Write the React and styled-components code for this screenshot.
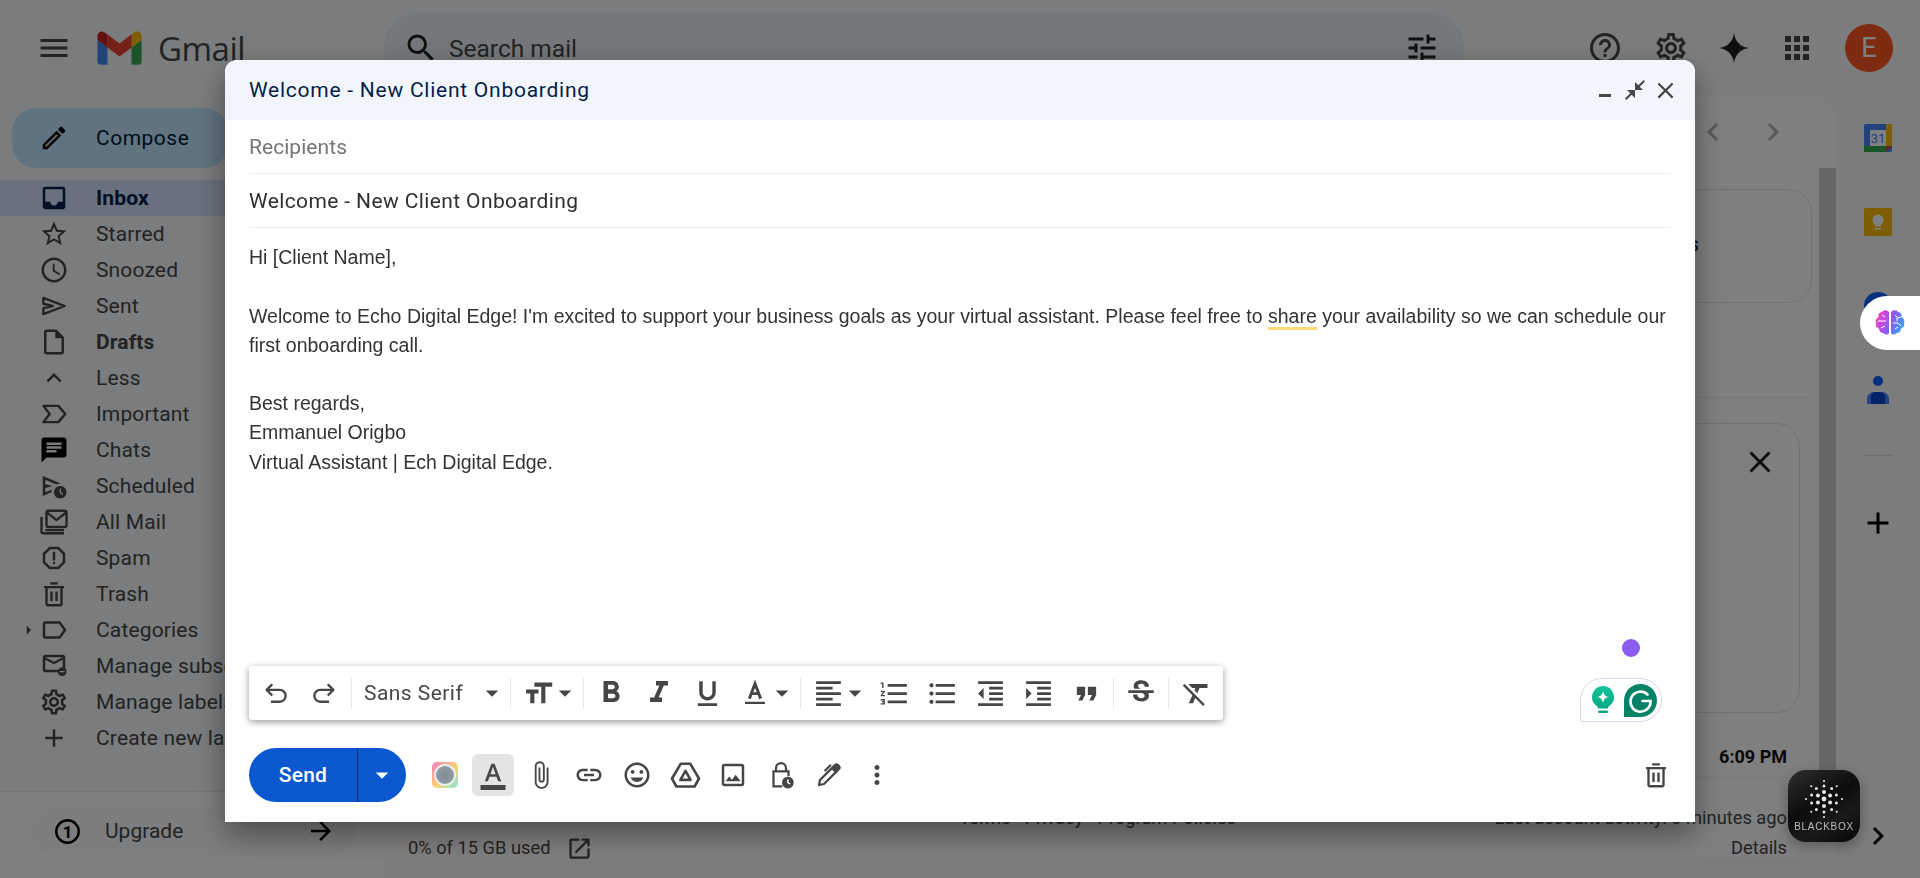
import styled, { createGlobalStyle } from 'styled-components';
import {
  MdMenu, MdSearch, MdTune, MdHelpOutline, MdOutlineSettings, MdApps, MdOutlineCreate, MdInbox,
  MdStarBorder, MdOutlineWatchLater, MdOutlineInsertDriveFile, MdExpandLess,
  MdChat, MdOutlineScheduleSend, MdOutlineReport,
  MdOutlineLabel, MdOutlineUnsubscribe, MdAdd, MdArrowForward, MdOpenInNew, MdChevronLeft,
  MdChevronRight, MdClose, MdCloseFullscreen, MdFormatSize, MdArrowDropDown,
  MdArrowRight, MdFormatBold, MdFormatItalic, MdFormatUnderlined, MdFormatColorText,
  MdFormatAlignLeft, MdFormatListNumbered, MdFormatListBulleted, MdFormatIndentDecrease,
  MdFormatIndentIncrease, MdFormatQuote, MdStrikethroughS, MdFormatClear, MdAttachFile, MdLink,
  MdOutlineInsertEmoticon, MdOutlineImage, MdMoreVert,
} from 'react-icons/md';

const GlobalStyle = createGlobalStyle`
  html, body, #root {
    margin: 0;
    height: 100%;
    overflow: hidden;
  }

  body {
    font-family: Roboto, "Liberation Sans", sans-serif;
    background: #f6f8fc;
  }
`;

const Page = styled.div`
  height: 100vh;
  display: grid;
  grid-template-columns: 384px 1fr 84px;
  grid-template-rows: 96px 1fr;
  background: #f6f8fc;
  color: #444746;
`;

const Header = styled.header`
  grid-column: 1 / -1;
  display: flex;
  align-items: center;
`;

const Brand = styled.div`
  width: 384px;
  display: flex;
  align-items: center;
  padding-left: 36px;
  box-sizing: border-box;
  gap: 25px;
`;

const BrandName = styled.span`
  margin-left: -9px;
  font-family: "Open Sans", sans-serif;
  font-size: 33px;
  letter-spacing: -0.5px;
  color: #444746;
`;

const SearchBar = styled.div`
  width: 1080px;
  height: 72px;
  border-radius: 36px;
  background: #e9eef6;
  display: flex;
  align-items: center;
  padding: 0 24px 0 19px;
  box-sizing: border-box;
  color: #1f1f1f;
`;

const SearchText = styled.span`
  flex: 1;
  margin-left: 10px;
  font-size: 24.5px;
  color: #444746;
`;

const HeaderIcons = styled.div`
  margin-left: auto;
  padding-right: 27px;
  display: flex;
  align-items: center;
  gap: 27px;
  color: #444746;
`;

const HeaderIcon = styled.span`
  width: 36px;
  height: 36px;
  display: flex;
  align-items: center;
  justify-content: center;
  margin-right: ${p => p.$mr || 0}px;
  color: ${p => p.$color || 'inherit'};
`;

const Avatar = styled.div`
  width: 48px;
  height: 48px;
  border-radius: 50%;
  background: #ff5722;
  color: #fff;
  font-size: 27px;
  display: flex;
  align-items: center;
  justify-content: center;
`;

const Sidebar = styled.aside`
  display: flex;
  flex-direction: column;
  min-height: 0;
`;

const Compose = styled.div`
  margin: 12px 0 12px 12px;
  width: 216px;
  height: 60px;
  border-radius: 24px;
  background: #c2e7ff;
  color: #001d35;
  display: flex;
  align-items: center;
  padding-left: 27px;
  box-sizing: border-box;
  font-size: 21px;
  letter-spacing: 0.5px;
  gap: 27px;
`;

const NavRow = styled.div`
  height: 36px;
  display: flex;
  align-items: center;
  padding-left: 18px;
  font-size: 21px;
  letter-spacing: 0.15px;
  white-space: nowrap;
  overflow: hidden;
  font-weight: ${p => (p.$strong ? 700 : 400)};
  background: ${p => (p.$active ? '#d3e3fd' : 'transparent')};
  color: ${p => (p.$active ? '#041e49' : '#444746')};
`;

const NavCaret = styled.span`
  width: 21px;
  display: flex;
  justify-content: center;
`;

const NavIcon = styled.span`
  width: 30px;
  height: 30px;
  margin-right: 27px;
  display: flex;
  color: ${p => p.$color || 'inherit'};
`;

const UpgradeBox = styled.div`
  margin-top: auto;
  height: 87px;
  border-top: 1px solid #e9ebee;
  background: #ffffff;
  padding-top: 15px;
  box-sizing: border-box;
`;

const UpgradePill = styled.div`
  margin-left: 30px;
  width: 325px;
  height: 48px;
  border-radius: 24px;
  background: #f8fafd;
  display: flex;
  align-items: center;
  padding: 0 19px 0 24px;
  box-sizing: border-box;
  font-size: 21px;
  gap: 24px;
`;

const UpgradeLabel = styled.span`
  flex: 1;
`;

const MainPanel = styled.main`
  display: flex;
  flex-direction: column;
  background: #fff;
  border-radius: 24px 24px 0 0;
  margin-bottom: 20px;
  min-height: 0;
`;

const MailBar = styled.div`
  height: 72px;
  display: flex;
  align-items: center;
  justify-content: flex-end;
  gap: 24px;
  padding-right: 45px;
  color: #b4b4b4;
`;

const ScrollArea = styled.div`
  flex: 1;
  display: flex;
  min-height: 0;
`;

const MailContent = styled.div`
  flex: 1;
  padding: 21px 0 0 24px;
  display: flex;
  flex-direction: column;

  > * {
    flex-shrink: 0;
  }
`;

const Scrollbar = styled.div`
  width: 17px;
  height: 632px;
  margin-left: 7px;
  background: #cfcfcf;
`;

const Card = styled.div`
  border: 1px solid #e3e3e3;
  border-radius: 24px;
  box-sizing: border-box;
  height: ${p => p.$height}px;
  margin-right: ${p => p.$inset || 0}px;
  display: flex;
  justify-content: flex-end;
  align-items: ${p => (p.$top ? 'flex-start' : 'center')};
  padding: ${p => (p.$top ? '20px 21px 0 0' : '0 112px 4px 0')};
  font-size: 21px;
  color: #1f1f1f;
`;

const Rule = styled.div`
  height: ${p => p.$height}px;
  margin-bottom: 25px;
  border-bottom: 1px solid #eeeeee;
`;

const TimeRow = styled.div`
  height: 65px;
  padding: 26px 25px 0 0;
  box-sizing: border-box;
  border-bottom: 1px solid #eeeeee;
  text-align: right;
  font-size: 18px;
  font-weight: 700;
  line-height: 36px;
  color: #111;
`;

const MailFooter = styled.div`
  display: grid;
  grid-template-columns: 1fr auto 1fr;
  padding: 25px 25px 0 0;
  font-size: 18.3px;
  line-height: 30px;
  color: #444746;
`;

const StorageNote = styled.div`
  margin-top: 30px;
  display: flex;
  align-items: center;
  gap: 15px;
`;

const AccountNote = styled.div`
  text-align: right;
`;

const Rail = styled.aside`
  display: flex;
  flex-direction: column;
  align-items: center;
`;

const RailCell = styled.div`
  height: 84px;
  display: flex;
  align-items: center;
  justify-content: center;
`;

const RailRule = styled.div`
  width: 30px;
  height: 1px;
  margin: 23px 0 37px;
  background: #dddddd;
`;

const RailPlus = styled.div`
  height: 60px;
  display: flex;
  align-items: center;
  color: #000;
`;

const RailChevron = styled.div`
  margin-top: auto;
  padding-bottom: 24px;
  color: #000;
  display: flex;
`;

const Overlay = styled.div`
  position: fixed;
  inset: 0;
  padding: 60px 225px 56px;
  box-sizing: border-box;
  background: rgba(0, 0, 0, 0.5);
`;

const Dialog = styled.section`
  position: relative;
  height: 100%;
  display: flex;
  flex-direction: column;
  background: #fff;
  border-radius: 12px 12px 0 0;
  box-shadow: 0 12px 30px rgba(0, 0, 0, 0.4);
`;

const TitleBar = styled.div`
  height: 60px;
  flex-shrink: 0;
  display: flex;
  align-items: center;
  padding: 0 15px 0 24px;
  background: #f2f6fc;
  border-radius: 12px 12px 0 0;
  color: #041e49;
  font-size: 21px;
  letter-spacing: 0.75px;
`;

const TitleText = styled.span`
  flex: 1;
`;

const TitleButton = styled.span`
  width: 30px;
  height: 30px;
  display: flex;
  align-items: center;
  justify-content: center;
  color: #444746;
`;

const Field = styled.div`
  height: 54px;
  margin: 0 24px;
  flex-shrink: 0;
  display: flex;
  align-items: center;
  box-sizing: border-box;
  border-bottom: 1.5px solid #eeeeee;
  font-size: 21px;
  letter-spacing: ${p => (p.$muted ? 0.05 : 0.38)}px;
  color: ${p => (p.$muted ? '#757575' : '#303030')};
`;

const Body = styled.div`
  flex: 1;
  padding: 15px 24px 0;
  font-family: "Liberation Sans", Arial, sans-serif;
  font-size: 19.5px;
  line-height: 29.1px;
  color: #333;
`;

const Flagged = styled.span`
  border-bottom: 3px solid #fcd977;
`;

const Blank = styled.div`
  height: ${p => p.$height || 29.1}px;
`;

const FormatBar = styled.div`
  align-self: flex-start;
  margin-left: 24px;
  height: 54px;
  display: flex;
  align-items: center;
  padding: 0 3px;
  background: #fff;
  border-radius: 3px;
  box-shadow: 0 2px 7px rgba(0, 0, 0, 0.4);
  color: #444746;
`;

const ToolButton = styled.span`
  width: 48px;
  height: 54px;
  display: flex;
  align-items: center;
  justify-content: center;
  flex-shrink: 0;
`;

const ToolCaret = styled.span`
  width: 18px;
  margin: 0 6px 0 -6px;
  display: flex;
  justify-content: center;
  color: #444746;
`;

const ToolSep = styled.span`
  width: 1px;
  height: 30px;
  margin: 0 3px;
  background: #e6e6e6;
`;

const FontPicker = styled.span`
  width: 152px;
  padding-left: 9px;
  box-sizing: border-box;
  display: flex;
  align-items: center;
  justify-content: space-between;
  font-size: 21px;
  letter-spacing: 0.45px;
  color: #444746;
`;

const Actions = styled.div`
  margin-top: 28px;
  height: 54px;
  padding: 0 15px 20px 24px;
  flex-shrink: 0;
  display: flex;
  align-items: center;
  color: #444746;
`;

const SendButton = styled.div`
  width: 157px;
  height: 54px;
  display: flex;
  border-radius: 27px;
  background: #0b57d0;
  color: #fff;
  font-size: 21px;
  font-weight: 500;
  letter-spacing: 0.2px;
  margin-right: 15px;
`;

const SendLabel = styled.span`
  width: 108px;
  display: flex;
  align-items: center;
  justify-content: center;
  border-right: 1px solid #062e70;
`;

const SendCaret = styled.span`
  flex: 1;
  display: flex;
  align-items: center;
  justify-content: center;
`;

const ActionCell = styled.span`
  width: 48px;
  height: 42px;
  display: flex;
  align-items: center;
  justify-content: center;
  margin-left: ${p => (p.$end ? 'auto' : 0)};
`;

const ActionActive = styled.span`
  width: 42px;
  height: 42px;
  display: flex;
  align-items: center;
  justify-content: center;
  border-radius: 6px;
  background: #e4e4e4;
`;

const LensBadge = styled.span`
  width: 26px;
  height: 26px;
  border-radius: 5px;
  background: linear-gradient(135deg, #f77ac0, #fbd36b 55%, #7fe8dc);
  display: flex;
  align-items: center;
  justify-content: center;
`;

const LensDot = styled.span`
  width: 18px;
  height: 18px;
  border-radius: 50%;
  border: 2px solid #e8eef2;
  background: radial-gradient(circle, #7f8a92, #98a2a9);
`;

const PurpleDot = styled.span`
  position: absolute;
  left: 1397px;
  top: 579px;
  width: 18px;
  height: 18px;
  border-radius: 50%;
  background: #8b5cf0;
`;

const GrammarlyPill = styled.div`
  position: absolute;
  left: 1355px;
  top: 618px;
  width: 82px;
  height: 44px;
  box-sizing: border-box;
  border: 1.5px solid #d5d8e6;
  border-radius: 22px 22px 22px 2px;
  background: #fff;
  display: flex;
  align-items: center;
  padding-left: 10px;
  gap: 9px;
`;

const BrainPill = styled.div`
  position: fixed;
  right: 0;
  top: 296px;
  width: 60px;
  height: 54px;
  border-radius: 27px 0 0 27px;
  background: #fff;
  display: flex;
  align-items: center;
  padding-left: 15px;
  box-sizing: border-box;
`;

const BlackboxTile = styled.div`
  position: fixed;
  left: 1788px;
  top: 770px;
  width: 72px;
  height: 72px;
  border-radius: 18px;
  background: linear-gradient(150deg, #2e2e2e, #0c0c0c 45%, #1a1a1a 68%, #050505);
  box-shadow: 0 4px 14px rgba(0, 0, 0, 0.3);
  display: flex;
  flex-direction: column;
  align-items: center;
  padding-top: 9px;
  box-sizing: border-box;
`;

const BlackboxLabel = styled.span`
  margin-top: 2px;
  font-family: "Liberation Sans", sans-serif;
  font-size: 10px;
  letter-spacing: 0.7px;
  color: #bdbdbd;
`;

const GmailLogo = () => (
  <svg width="45" height="34" viewBox="0 2.7 24 18.5">
    <path fill="#4285f4" d="M1.636 21h3.818v-9.273L0 7.636v11.727C0 20.267.733 21 1.636 21z" />
    <path fill="#34a853" d="M18.546 21h3.818C23.267 21 24 20.267 24 19.364V7.636l-5.454 4.091z" />
    <path fill="#fbbc04" d="M18.546 4.636v7.091L24 7.636V5.455c0-2.023-2.309-3.177-3.927-1.964z" />
    <path fill="#ea4335" d="M5.455 11.727V4.636L12 9.545l6.546-4.909v7.091L12 16.636z" />
    <path fill="#c5221f" d="M0 5.455v2.181l5.455 4.091V4.636L3.927 3.491C2.309 2.278 0 3.432 0 5.455z" />
  </svg>
);

const SparkIcon = () => (
  <svg width="32" height="32" viewBox="0 0 24 24" fill="currentColor">
    <path d="M12 0.5C12.6 7 17 11.4 23.5 12 17 12.6 12.6 17 12 23.5 11.4 17 7 12.6 0.5 12 7 11.4 11.4 7 12 0.5z" />
  </svg>
);

const LineIcon = styled.svg`
  fill: none;
  stroke: currentColor;
  stroke-width: ${p => p.$weight || 1.9};
  stroke-linejoin: round;
`;

const SentIcon = () => (
  <LineIcon width="30" height="30" viewBox="0 0 24 24">
    <path d="M3.500 5.500L20.500 12 3.500 18.500v-4.700l7.500-1.800-7.500-1.800z" />
  </LineIcon>
);

const ImportantIcon = () => (
  <LineIcon width="30" height="30" viewBox="0 0 24 24">
    <path d="M3.500 5.500H15.500L21 12l-5.500 6.500H3.500L8.500 12z" />
  </LineIcon>
);

const TrashIcon = () => (
  <LineIcon width="30" height="30" viewBox="0 0 24 24">
    <path d="M6 6.500V20a1 1 0 0 0 1 1h10a1 1 0 0 0 1-1V6.500M4 6.500h16M9 3.500h6M10 10v7.500M14 10v7.500" />
  </LineIcon>
);

const AllMailIcon = () => (
  <LineIcon width="30" height="30" viewBox="0 0 24 24">
    <rect x="6" y="3" width="16" height="13" rx="1.500" />
    <path d="M6.500 4.500l7.500 6 7.500-6" />
    <path d="M2 8v11.500a1.500 1.500 0 0 0 1.500 1.500H20M5 18.500h15" />
  </LineIcon>
);

const UndoIcon = () => (
  <LineIcon width="30" height="30" viewBox="0 0 24 24" $weight={1.9}>
    <path d="M9 5L4.500 9.500 9 14M4.500 9.500H15a4.700 4.700 0 0 1 0 9.500H8" />
  </LineIcon>
);

const RedoIcon = () => (
  <LineIcon width="30" height="30" viewBox="0 0 24 24" $weight={1.9}>
    <path d="M15 5l4.500 4.500L15 14M19.500 9.500H9a4.700 4.700 0 0 0 0 9.500h7" />
  </LineIcon>
);

const TextColorIcon = () => (
  <svg width="30" height="30" viewBox="0 0 24 24">
    <path fill="none" stroke="currentColor" strokeWidth="2.300" d="M7.500 16.500L12 4.500l4.500 12M9 12.500h6" />
    <rect x="4" y="19" width="16" height="1.800" fill="currentColor" />
  </svg>
);

const UpgradeIcon = () => (
  <svg width="27" height="27" viewBox="0 0 24 24">
    <circle cx="12" cy="12" r="10" fill="none" stroke="#000" strokeWidth="2.200" />
    <text x="12" y="17.500" textAnchor="middle" fontSize="15" fontWeight="700" fontFamily="Roboto">1</text>
  </svg>
);

const MinimizeIcon = () => (
  <svg width="30" height="30" viewBox="0 0 30 30">
    <rect x="9" y="19" width="12" height="3" fill="currentColor" />
  </svg>
);

const DriveIcon = () => (
  <LineIcon width="33" height="33" viewBox="0 0 24 24">
    <path d="M8.500 3.500h7l6.300 10.700-3.200 5.800H5.400l-3.200-5.800z" />
    <path d="M12 8.700l3.700 6.500H8.300z" />
  </LineIcon>
);

const LockClockIcon = () => (
  <svg width="30" height="30" viewBox="0 0 24 24">
    <path fill="none" stroke="currentColor" strokeWidth="1.800" d="M8 9V6.500a4 4 0 0 1 8 0V9M13 21H6V9h12v4" />
    <circle cx="17.500" cy="18" r="4.700" fill="currentColor" />
    <path fill="none" stroke="#fff" strokeWidth="1.200" d="M17.500 15.500V18l1.800 1.200" />
  </svg>
);

const SignatureIcon = () => (
  <LineIcon width="30" height="30" viewBox="0 0 24 24" $weight={1.8}>
    <path d="M4 20l.8-4L14.500 6.300l3.200 3.200L8 19.200z" />
    <path fill="currentColor" d="M14.500 6.300l2.300-2.300a1.600 1.600 0 0 1 2.300 0l.9.900a1.600 1.600 0 0 1 0 2.300l-2.300 2.300z" />
    <path d="M13.500 3.800L8.500 8.800" />
  </LineIcon>
);

const CalendarIcon = () => (
  <svg width="28" height="28" viewBox="0 0 28 28">
    <rect width="28" height="28" rx="2" fill="#4285f4" />
    <rect x="22" y="0" width="6" height="22" fill="#fbbc04" />
    <rect x="0" y="22" width="22" height="6" fill="#34a853" />
    <path d="M22 28l6-6h-6z" fill="#ea4335" />
    <rect x="6" y="6" width="16" height="16" fill="#fff" />
    <text x="14" y="19" textAnchor="middle" fontSize="13" fontFamily="Roboto" fill="#4285f4">31</text>
  </svg>
);

const KeepIcon = () => (
  <svg width="28" height="28" viewBox="0 0 28 28">
    <rect width="28" height="28" rx="2" fill="#fbbc04" />
    <circle cx="14" cy="12" r="5.500" fill="#fff" />
    <rect x="11" y="16" width="6" height="2.500" fill="#fff" />
    <rect x="11" y="20" width="6" height="1.600" fill="#fff" />
  </svg>
);

const TasksIcon = () => (
  <svg width="30" height="30" viewBox="0 0 30 30">
    <circle cx="15" cy="15" r="14" fill="#0b5fff" />
  </svg>
);

const ContactsIcon = () => (
  <svg width="24" height="28" viewBox="0 0 24 28">
    <circle cx="12" cy="5" r="5" fill="#0b5fff" />
    <path d="M1 28v-6a7 7 0 0 1 7-6h8a7 7 0 0 1 7 6v6z" fill="#0b5fff" opacity=".75" />
    <path d="M5 28v-7a5 5 0 0 1 5-5h4a5 5 0 0 1 5 5v7z" fill="#0747d0" />
  </svg>
);

const BrainIcon = () => (
  <svg width="30" height="28" viewBox="0 0 30 28">
    <defs>
      <linearGradient id="brainFill" x1="0" y1="0" x2="1" y2="0.4">
        <stop offset="0" stopColor="#f2608a" />
        <stop offset="0.3" stopColor="#d246d8" />
        <stop offset="0.65" stopColor="#8a5cf0" />
        <stop offset="1" stopColor="#3f9cf5" />
      </linearGradient>
    </defs>
    <path fill="url(#brainFill)" d="M14 3C12 .5 8 .5 7 3 4 3 3 6 3.500 8 1 9 0 12 1 14c-1 3 1 5 3 5.500 0 3 2.500 5 4.500 4.500 2 2.500 5 1.500 5.500 0zM16 3c2-2.500 6-2.500 7 0 3 0 4 3 3.500 5 2.500 1 3.500 4 2.500 6 1 3-1 5-3 5.500 0 3-2.500 5-4.500 4.500-2 2.500-5 1.500-5.500 0z" />
    <path fill="none" stroke="#fff" strokeWidth="1" d="M3 12h8M7 6l3 2M6 19l4-2M20 6l3 3 3-1M22 9v3M18 14h5l3 3M20 20l3-2" />
  </svg>
);

const BulbIcon = () => (
  <svg width="24" height="30" viewBox="0 0 24 30">
    <defs>
      <linearGradient id="bulbFill" x1="0" y1="0" x2="0" y2="1">
        <stop offset="0" stopColor="#15c39a" />
        <stop offset="1" stopColor="#02a884" />
      </linearGradient>
    </defs>
    <path fill="url(#bulbFill)" d="M12 1a11 11 0 0 1 6.500 19.800c-.9.700-1.500 1.700-1.500 2.700H7c0-1-.6-2-1.500-2.700A11 11 0 0 1 12 1z" />
    <rect x="7" y="25.500" width="10" height="2.500" rx="1.200" fill="#02a884" />
    <path fill="#fff" d="M12 6c.4 3.500 2.500 5.600 6 6-3.500.4-5.600 2.500-6 6-.4-3.500-2.500-5.600-6-6 3.500-.4 5.600-2.500 6-6z" />
  </svg>
);

const GrammarlyBadge = () => (
  <svg width="33" height="33" viewBox="0 0 33 33">
    <path fill="#028267" d="M16.500 0a16.500 16.500 0 0 1 0 33H0V16.500A16.500 16.500 0 0 1 16.500 0z" />
    <path fill="none" stroke="#fff" strokeWidth="2.600" strokeLinecap="round" d="M23.500 10.500a10 10 0 1 0 3 6.500h-8" />
  </svg>
);

// concentric rings of dots, the mark on the Blackbox tile
const dotRings = [
  { radius: 0, count: 1, size: 2.4 },
  { radius: 7, count: 6, size: 2 },
  { radius: 13, count: 10, size: 1.5 },
  { radius: 18, count: 8, size: 1.1 },
];

const BlackboxDots = () => (
  <svg width="40" height="40" viewBox="-20 -20 40 40">
    {dotRings.flatMap(ring =>
      Array.from({ length: ring.count }, (_, i) => {
        const angle = (i / ring.count) * Math.PI * 2 - Math.PI / 2;
        return (
          <circle
            key={`${ring.radius}-${i}`}
            cx={Math.cos(angle) * ring.radius}
            cy={Math.sin(angle) * ring.radius}
            r={ring.size}
            fill="#e6e6e6"
          />
        );
      })
    )}
  </svg>
);

const navItems = [
  { label: 'Inbox', icon: <MdInbox size={30} />, active: true, strong: true, color: '#041e49' },
  { label: 'Starred', icon: <MdStarBorder size={30} /> },
  { label: 'Snoozed', icon: <MdOutlineWatchLater size={30} /> },
  { label: 'Sent', icon: <SentIcon /> },
  { label: 'Drafts', icon: <MdOutlineInsertDriveFile size={30} />, strong: true },
  { label: 'Less', icon: <MdExpandLess size={30} /> },
  { label: 'Important', icon: <ImportantIcon /> },
  { label: 'Chats', icon: <MdChat size={30} />, color: '#000' },
  { label: 'Scheduled', icon: <MdOutlineScheduleSend size={30} /> },
  { label: 'All Mail', icon: <AllMailIcon /> },
  { label: 'Spam', icon: <MdOutlineReport size={30} /> },
  { label: 'Trash', icon: <TrashIcon /> },
  { label: 'Categories', icon: <MdOutlineLabel size={30} />, expandable: true },
  { label: 'Manage subscriptions', icon: <MdOutlineUnsubscribe size={30} /> },
  { label: 'Manage labels', icon: <MdOutlineSettings size={30} /> },
  { label: 'Create new label', icon: <MdAdd size={30} /> },
];

const toolCaret = (
  <ToolCaret>
    <MdArrowDropDown size={30} style={{ flexShrink: 0 }} />
  </ToolCaret>
);

function App() {
  return (
    <>
      <GlobalStyle />
      <Page>
        <Header>
          <Brand>
            <MdMenu size={36} />
            <GmailLogo />
            <BrandName>Gmail</BrandName>
          </Brand>
          <SearchBar>
            <MdSearch size={36} />
            <SearchText>Search mail</SearchText>
            <MdTune size={36} />
          </SearchBar>
          <HeaderIcons>
            <HeaderIcon $mr={3}><MdHelpOutline size={36} /></HeaderIcon>
            <HeaderIcon><MdOutlineSettings size={36} /></HeaderIcon>
            <HeaderIcon $color="#1f1f1f"><SparkIcon /></HeaderIcon>
            <HeaderIcon $mr={3}><MdApps size={36} /></HeaderIcon>
            <Avatar>E</Avatar>
          </HeaderIcons>
        </Header>

        <Sidebar>
          <Compose>
            <MdOutlineCreate size={30} color="#000" />
            Compose
          </Compose>
          {navItems.map(item => (
            <NavRow key={item.label} $active={item.active} $strong={item.strong}>
              <NavCaret>{item.expandable && <MdArrowRight size={24} />}</NavCaret>
              <NavIcon $color={item.color}>{item.icon}</NavIcon>
              {item.label}
            </NavRow>
          ))}
          <UpgradeBox>
            <UpgradePill>
              <UpgradeIcon />
              <UpgradeLabel>Upgrade</UpgradeLabel>
              <MdArrowForward size={30} color="#000" />
            </UpgradePill>
          </UpgradeBox>
        </Sidebar>

        <MainPanel>
          <MailBar>
            <MdChevronLeft size={36} />
            <MdChevronRight size={36} />
          </MailBar>
          <ScrollArea>
            <MailContent>
              <Card $height={114}>s</Card>
              <Rule $height={94} />
              <Card $height={290} $inset={12} $top>
                <MdClose size={36} />
              </Card>
              <TimeRow>6:09 PM</TimeRow>
              <MailFooter>
                <StorageNote>
                  0% of 15 GB used
                  <MdOpenInNew size={27} />
                </StorageNote>
                <div>Terms · Privacy · Program Policies</div>
                <AccountNote>
                  Last account activity: 0 minutes ago
                  <br />
                  Details
                </AccountNote>
              </MailFooter>
            </MailContent>
            <Scrollbar />
          </ScrollArea>
        </MainPanel>

        <Rail>
          <RailCell><CalendarIcon /></RailCell>
          <RailCell><KeepIcon /></RailCell>
          <RailCell><TasksIcon /></RailCell>
          <RailCell><ContactsIcon /></RailCell>
          <RailRule />
          <RailPlus><MdAdd size={36} /></RailPlus>
          <RailChevron><MdChevronRight size={36} /></RailChevron>
        </Rail>
      </Page>

      <Overlay>
        <Dialog>
          <TitleBar>
            <TitleText>Welcome - New Client Onboarding</TitleText>
            <TitleButton><MinimizeIcon /></TitleButton>
            <TitleButton><MdCloseFullscreen size={24} /></TitleButton>
            <TitleButton><MdClose size={27} /></TitleButton>
          </TitleBar>
          <Field $muted>Recipients</Field>
          <Field>Welcome - New Client Onboarding</Field>
          <Body>
            <div>Hi [Client Name],</div>
            <Blank $height={30} />
            <div>
              Welcome to Echo Digital Edge! I'm excited to support your business goals as your virtual
              assistant. Please feel free to <Flagged>share</Flagged> your availability so we can schedule our
              first onboarding call.
            </div>
            <Blank />
            <div>Best regards,</div>
            <div>Emmanuel Origbo</div>
            <div>Virtual Assistant | Ech Digital Edge.</div>
          </Body>
          <FormatBar>
            <ToolButton><UndoIcon /></ToolButton>
            <ToolButton><RedoIcon /></ToolButton>
            <ToolSep />
            <FontPicker>
              Sans Serif
              <MdArrowDropDown size={30} />
            </FontPicker>
            <ToolSep />
            <ToolButton><MdFormatSize size={33} /></ToolButton>
            {toolCaret}
            <ToolSep />
            <ToolButton><MdFormatBold size={36} /></ToolButton>
            <ToolButton><MdFormatItalic size={36} /></ToolButton>
            <ToolButton><MdFormatUnderlined size={33} /></ToolButton>
            <ToolButton><TextColorIcon /></ToolButton>
            {toolCaret}
            <ToolSep />
            <ToolButton><MdFormatAlignLeft size={33} /></ToolButton>
            {toolCaret}
            <ToolButton><MdFormatListNumbered size={33} /></ToolButton>
            <ToolButton><MdFormatListBulleted size={33} /></ToolButton>
            <ToolButton><MdFormatIndentDecrease size={33} /></ToolButton>
            <ToolButton><MdFormatIndentIncrease size={33} /></ToolButton>
            <ToolButton><MdFormatQuote size={33} /></ToolButton>
            <ToolSep />
            <ToolButton><MdStrikethroughS size={34} /></ToolButton>
            <ToolSep />
            <ToolButton><MdFormatClear size={33} /></ToolButton>
          </FormatBar>
          <Actions>
            <SendButton>
              <SendLabel>Send</SendLabel>
              <SendCaret><MdArrowDropDown size={30} /></SendCaret>
            </SendButton>
            <ActionCell><LensBadge><LensDot /></LensBadge></ActionCell>
            <ActionCell><ActionActive><MdFormatColorText size={30} /></ActionActive></ActionCell>
            <ActionCell><MdAttachFile size={30} /></ActionCell>
            <ActionCell><MdLink size={30} /></ActionCell>
            <ActionCell><MdOutlineInsertEmoticon size={30} /></ActionCell>
            <ActionCell><DriveIcon /></ActionCell>
            <ActionCell><MdOutlineImage size={30} /></ActionCell>
            <ActionCell><LockClockIcon /></ActionCell>
            <ActionCell><SignatureIcon /></ActionCell>
            <ActionCell><MdMoreVert size={30} /></ActionCell>
            <ActionCell $end><TrashIcon /></ActionCell>
          </Actions>
          <PurpleDot />
          <GrammarlyPill>
            <BulbIcon />
            <GrammarlyBadge />
          </GrammarlyPill>
        </Dialog>
      </Overlay>

      <BrainPill><BrainIcon /></BrainPill>
      <BlackboxTile>
        <BlackboxDots />
        <BlackboxLabel>BLACKBOX</BlackboxLabel>
      </BlackboxTile>
    </>
  );
}

export default App;
